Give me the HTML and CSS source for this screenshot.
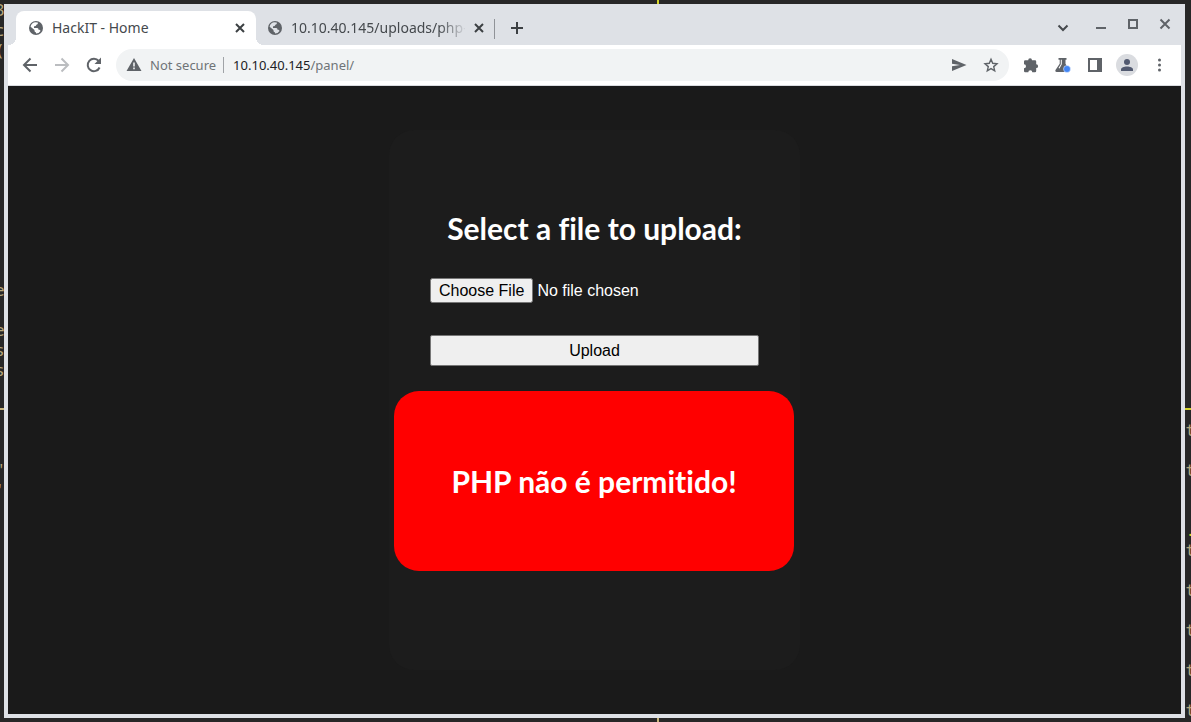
FILE: index.html
```html
<!DOCTYPE html>
<html lang="en">
<head>
<meta charset="utf-8">
<title>HackIT - Home</title>
<link rel="stylesheet" href="styles.css">
</head>
<body>
<div class="desktop">
  <pre class="term term-left" aria-hidden="true">3
c
(











e

e
s
s




"
'</pre>
  <pre class="term term-right" aria-hidden="true">





















t

t


<span class="lime">.</span>
t

t

t

t

t</pre>
  <i class="rule rule-top"></i><i class="rule rule-bottom"></i>
  <i class="rule rule-left"></i><i class="rule rule-right"></i>

  <div class="window">
    <header class="tabstrip">
      <div class="tab active">
        <svg class="globe" viewBox="0 0 16 16"><circle cx="8" cy="8" r="7" fill="#5f6368"/><path d="M7 2.200 9.800 2.400c.3 1.400-.3 2-1.500 2.300-.2 1.300-1 1.600-2.300 1.600v1.600h3.200c1 0 1.300.7 1.300 1.800 1.400-.1 1.800.5 2 1.300A5.600 5.600 0 0 1 8 13.600v-1.400c-1 0-1.500-.6-1.500-1.500v-.8L2.600 6.700A5.600 5.600 0 0 1 7 2.200z" fill="#fff"/></svg>
        <span class="tab-title">HackIT - Home</span>
        <button class="close" aria-label="Close tab"><svg viewBox="0 0 10 10"><path d="M1 1l8 8M9 1l-8 8"/></svg></button>
      </div>
      <div class="tab">
        <svg class="globe" viewBox="0 0 16 16"><circle cx="8" cy="8" r="7" fill="#5f6368"/><path d="M7 2.200 9.800 2.400c.3 1.400-.3 2-1.500 2.300-.2 1.300-1 1.600-2.300 1.600v1.600h3.200c1 0 1.300.7 1.300 1.800 1.400-.1 1.800.5 2 1.300A5.600 5.600 0 0 1 8 13.600v-1.400c-1 0-1.500-.6-1.500-1.500v-.8L2.600 6.700A5.600 5.600 0 0 1 7 2.200z" fill="#dee1e6"/></svg>
        <span class="tab-title fade">10.10.40.145/uploads/php-r</span>
        <button class="close" aria-label="Close tab"><svg viewBox="0 0 10 10"><path d="M1 1l8 8M9 1l-8 8"/></svg></button>
      </div>
      <button class="new-tab" aria-label="New tab"><svg viewBox="0 0 12 12"><path d="M6 0v12M0 6h12"/></svg></button>
      <div class="controls">
        <button class="search-tabs" aria-label="Search tabs"><svg viewBox="0 0 12 12"><path d="M1.500 3.500 6 8l4.500-4.500"/></svg></button>
        <button aria-label="Minimize"><svg viewBox="0 0 12 12"><path d="M1 10h10"/></svg></button>
        <button aria-label="Maximize"><svg viewBox="0 0 12 12"><path d="M2 2h8v8H2z"/></svg></button>
        <button aria-label="Close window"><svg viewBox="0 0 12 12"><path d="M1.500 1.500l9 9M10.500 1.500l-9 9"/></svg></button>
      </div>
    </header>

    <nav class="toolbar">
      <button aria-label="Back"><svg viewBox="0 0 16 16"><path class="line" d="M15 8H2M8.500 1.500 2 8l6.500 6.500"/></svg></button>
      <button class="disabled" aria-label="Forward"><svg viewBox="0 0 16 16"><path class="line" d="M1 8h13M7.500 1.500 14 8l-6.500 6.500"/></svg></button>
      <button aria-label="Reload"><svg viewBox="0 0 16 16"><path class="line" d="M13.600 10.500A6.200 6.200 0 1 1 12.700 4"/><path d="M15 .5v6.500H8.500z"/></svg></button>
      <div class="omnibox">
        <svg class="warn" viewBox="0 0 16 16"><path fill-rule="evenodd" d="M8 1 15.500 14H.5zM7.200 5.500v4h1.600v-4zM7.200 10.600v1.600h1.600v-1.600z"/></svg>
        <span class="insecure">Not secure</span>
        <span class="url"><b>10.10.40.145</b>/panel/</span>
        <button aria-label="Share"><svg viewBox="0 0 16 16"><path d="M1 2l14.500 6L1 14V9.300L9 8 1 6.700z"/></svg></button>
        <button aria-label="Bookmark"><svg viewBox="0 0 16 16"><path class="thin" d="M8 2.300l1.700 4 4.300.4-3.300 2.900 1 4.200L8 11.600l-3.700 2.200 1-4.200L2 6.700l4.300-.4z"/></svg></button>
      </div>
      <button aria-label="Extensions"><svg viewBox="0 0 16 16"><path d="M2.200 3.200h3A1.900 1.900 0 0 1 9 3.200h3q1.200 0 1.200 1.200v2.900a1.900 1.900 0 0 1 0 3.800V14q0 1.200-1.200 1.200H9.300a2 2 0 0 0-4 0H2.200Q1 15.200 1 14v-2.700a2 2 0 0 0 0-4V4.400q0-1.200 1.200-1.200z"/></svg></button>
      <button aria-label="Experiments"><svg viewBox="0 0 16 16"><path fill-rule="evenodd" d="M3.500 1h8v1.800h-1v4l3.700 6.200c.6 1-.1 2-1.200 2H1.700C.6 15 0 14 .5 13l4.200-6.200v-4H3.500zM5.800 2.800v4.500L3.500 11l1 .5 2.300-4.200V2.800z"/><circle cx="12" cy="12" r="3.500" fill="#4285f4" stroke="#fff" stroke-width=".5"/></svg></button>
      <button aria-label="Side panel"><svg viewBox="0 0 16 16"><path fill-rule="evenodd" d="M1 1h14v14H1zM3 3v10h7V3z"/></svg></button>
      <button class="profile" aria-label="Profile"><svg viewBox="0 0 22 22"><circle cx="11" cy="11" r="11" fill="#dadce0"/><circle cx="11" cy="8" r="3" fill="#525a70"/><path d="M5 17v-1.500c0-4 12-4 12 0V17z" fill="#525a70"/></svg></button>
      <button aria-label="Menu"><svg viewBox="0 0 16 16"><circle cx="8.500" cy="3" r="1.500"/><circle cx="8.500" cy="8" r="1.500"/><circle cx="8.500" cy="13" r="1.500"/></svg></button>
    </nav>

    <main class="page">
      <section class="card">
        <form class="upload">
          <h1 class="title"><label for="file">Select a file to upload:</label></h1>
          <input class="file" id="file" type="file">
          <button class="submit" type="button">Upload</button>
        </form>
        <p class="alert title" role="alert">PHP não é permitido!</p>
      </section>
    </main>
  </div>
</div>
</body>
</html>
```
FILE: styles.css
```css
* { box-sizing: border-box; }

body {
  margin: 0;
  font-family: "Noto Sans", sans-serif;
}

.desktop {
  position: relative;
  display: flex;
  min-height: 100vh;
  padding: 4px 6px 4px 4px;
  background: #272727;
  overflow: hidden;
}

/* terminal showing around the browser window */
.term {
  position: absolute;
  top: 0;
  margin: 0;
  font: 16px/20px "Noto Sans Mono", "DejaVu Sans Mono", monospace;
  color: #b5a67c;
}
.term-left { left: -5px; }
.term-right { right: -4px; }
.lime { color: #d5d52a; }

.rule { position: absolute; background: #c8b57c; }
.rule-top, .rule-bottom { left: 657px; width: 2px; height: 4px; }
.rule-top { top: 0; background: #d5d52a; }
.rule-bottom { bottom: 0; }
.rule-left, .rule-right { top: 408px; width: 6px; height: 2px; }
.rule-left { left: 0; }
.rule-right { right: 0; background: #d5d52a; }

.window {
  position: relative;
  flex: 1;
  display: flex;
  flex-direction: column;
  border: 4px solid #dee1e6;
  border-top: 0;
}

button {
  display: flex;
  align-items: center;
  justify-content: center;
  padding: 0;
  border: 0;
  background: none;
}
svg { display: block; flex: none; }

/* tabs */
.tabstrip {
  display: flex;
  height: 41px;
  padding: 7px 0 0 8px;
  background: #dee1e6;
}
.tab {
  position: relative;
  display: flex;
  align-items: center;
  width: 239px;
  padding: 0 10px 0 11px;
}
.tab.active {
  width: 240px;
  padding-left: 12px;
  background: #fff;
  border-radius: 8px 8px 0 0;
}
.tab.active::before,
.tab.active::after {
  content: "";
  position: absolute;
  bottom: 0;
  width: 8px;
  height: 8px;
}
.tab.active::before {
  right: 100%;
  background: radial-gradient(circle at 0 0, #dee1e6 8px, #fff 8px);
}
.tab.active::after {
  left: 100%;
  background: radial-gradient(circle at 100% 0, #dee1e6 8px, #fff 8px);
}
.tab:not(.active)::after {
  content: "";
  position: absolute;
  right: 0;
  top: 8px;
  width: 1px;
  height: 20px;
  background: #909398;
}
.globe { width: 16px; height: 16px; }
.tab-title {
  flex: 1;
  margin-left: 8px;
  overflow: hidden;
  white-space: nowrap;
  font-size: 14px;
  line-height: 20px;
  color: #45494d;
}
.fade {
  -webkit-mask-image: linear-gradient(to right, #000 148px, transparent 176px);
  mask-image: linear-gradient(to right, #000 148px, transparent 176px);
}
.close { width: 12px; height: 16px; }
.tab:not(.active) .close { margin: 0 0 0 8px; }
.close svg { width: 10px; height: 10px; }
.tabstrip button path { fill: none; stroke: #3c4043; stroke-width: 2; }
.new-tab { width: 44px; }
.new-tab svg { width: 12px; height: 12px; }
.controls {
  display: flex;
  align-items: flex-start;
  margin-left: auto;
}
.controls button { width: 32px; height: 26px; }
.controls svg { width: 12px; height: 12px; }
.controls button path { stroke: #5f6368; }
.controls .search-tabs { width: 44px; height: 34px; }
.controls .search-tabs path { stroke: #45494d; }

/* toolbar */
.toolbar {
  display: flex;
  align-items: center;
  height: 41px;
  padding: 0 6px;
  background: #fff;
  border-bottom: 1px solid #dadce0;
}
.toolbar button { width: 32px; height: 32px; }
.toolbar svg { width: 16px; height: 16px; fill: #5f6368; }
.toolbar .profile svg { width: 22px; height: 22px; }
.toolbar .line { fill: none; stroke: #5f6368; stroke-width: 2; }
.toolbar .thin { fill: none; stroke: #5f6368; stroke-width: 1.4; }
.toolbar .disabled .line { stroke: #bbbdc0; }
.omnibox {
  flex: 1;
  display: flex;
  align-items: center;
  height: 32px;
  margin: 0 6px;
  padding: 0 2px 0 10px;
  border-radius: 16px;
  background: #f1f3f4;
  font-size: 13px;
  line-height: 16px;
  color: #6f7377;
}
.insecure {
  margin-left: 8px;
  padding-right: 7px;
  border-right: 1px solid #a0a3a7;
}
.url { flex: 1; margin-left: 9px; }
.url b { font-weight: 400; color: #202124; }

/* page */
.page {
  flex: 1;
  padding: 44px 0;
  background: #1a1a1a;
}
.card {
  max-width: 411px;
  margin: 0 auto;
  padding: 78px 5px 99px;
  border-radius: 25px;
  background: #1c1c1c;
}
.upload {
  display: flex;
  flex-direction: column;
  padding: 0 36px;
}
.title {
  margin: 0;
  font-family: Lato, "Noto Sans", sans-serif;
  font-size: 30px;
  font-weight: 700;
  font-variant-ligatures: none;
  line-height: 40px;
  text-align: center;
  white-space: nowrap;
  color: #fff;
}
.file {
  height: 25px;
  margin-top: 30px;
  font: 16px "Liberation Sans", Arial, sans-serif;
  color: #fff;
}
.file::file-selector-button { height: 25px; padding: 1px 7px; }
.submit {
  height: 31px;
  margin-top: 32px;
  border: 1px solid #767676;
  border-radius: 2px;
  background: #efefef;
  font: 16px "Liberation Sans", Arial, sans-serif;
  color: #000;
}
.alert {
  max-width: 400px;
  margin-top: 25px;
  padding: 70px 0;
  border-radius: 25px;
  background: #f00;
}
```
